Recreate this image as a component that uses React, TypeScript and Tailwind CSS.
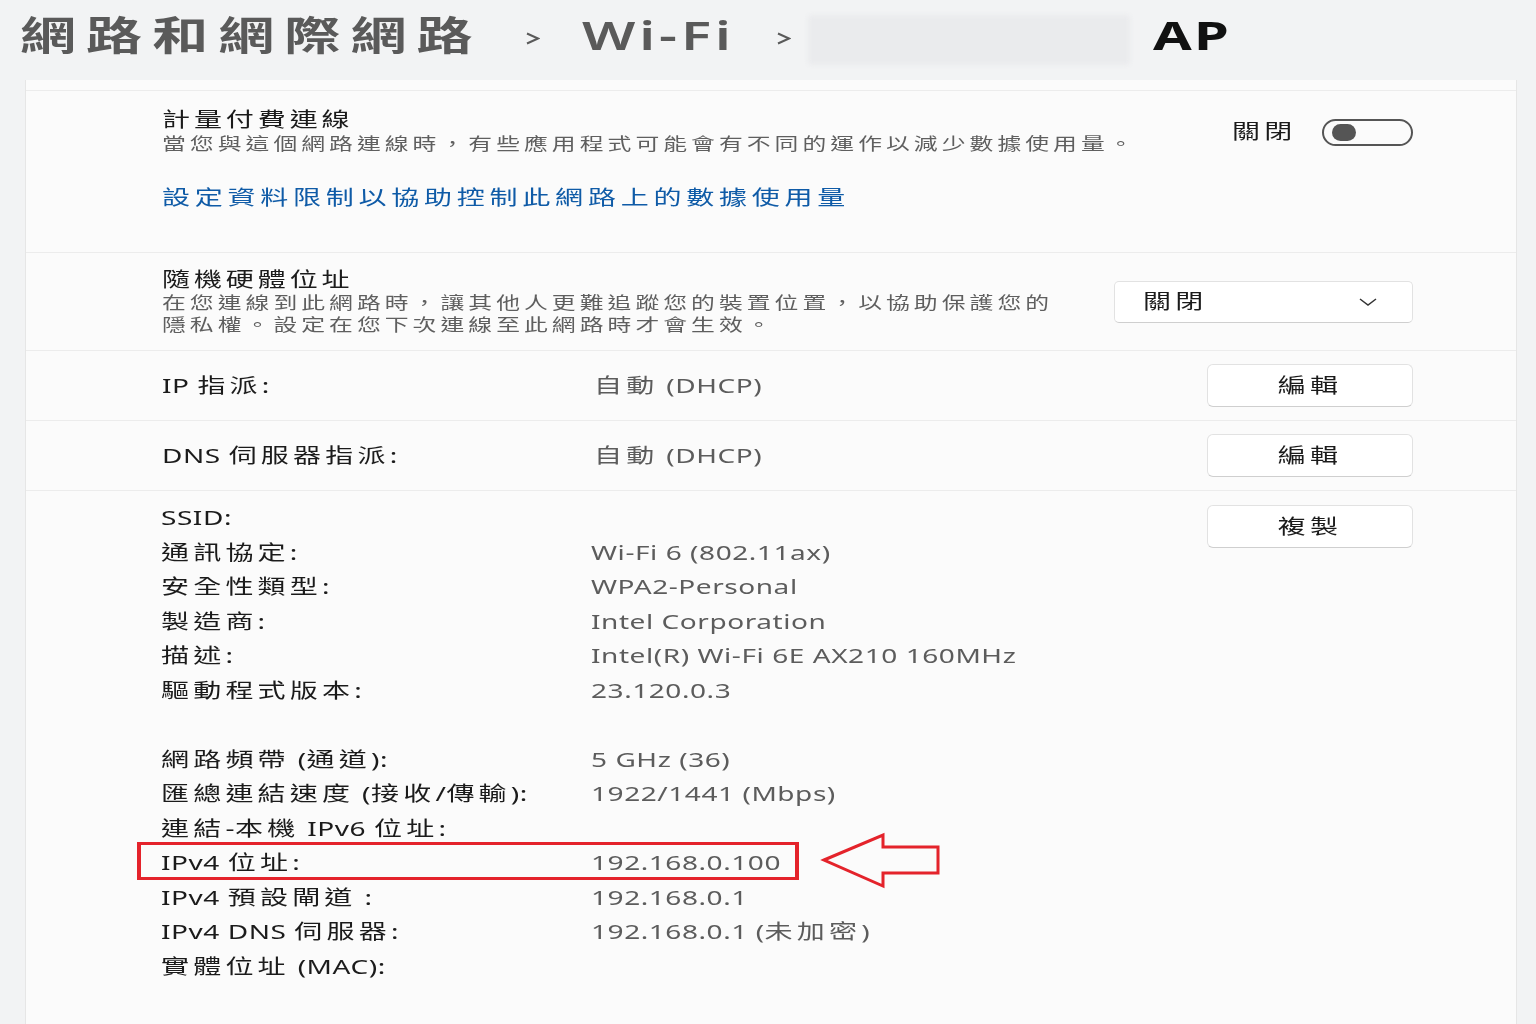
import React from "react";

const CJK = /([\u2E80-\u9FFF\uF900-\uFAFF\uFF00-\uFFEF\u3000-\u303F]+)/;

function T({
  text,
  c = "tracking-[0.15em]",
  l = "tracking-[0.02em]",
  center = false,
}: {
  text: string;
  c?: string;
  l?: string;
  center?: boolean;
}) {
  const parts = text.split(CJK);
  return (
    <span
      className={
        center
          ? "inline-block whitespace-nowrap origin-center scale-x-[1.4]"
          : "inline-block whitespace-nowrap origin-left scale-x-[1.4]"
      }
    >
      {parts.map((p, i) =>
        p ? (
          <span key={i} className={CJK.test(p) ? c : l}>
            {p}
          </span>
        ) : null
      )}
    </span>
  );
}

function Chevron() {
  return (
    <svg width="15" height="13" viewBox="0 0 15 13" className="shrink-0 mt-[22px]">
      <path d="M2 1.5 L13 6.5 L2 11.5" fill="none" stroke="#5a5a5a" strokeWidth="2" />
    </svg>
  );
}

function Btn({ label }: { label: string }) {
  return (
    <div className="w-[206px] h-[43px] shrink-0 rounded-[6px] bg-white border border-[#e2e2e2] border-b-[#cfcfcf] flex items-center justify-center text-[20px] text-[#1b1b1b]">
      <T text={label} center />
    </div>
  );
}

const props1: [string, string][] = [
  ["SSID:", ""],
  ["通訊協定:", "Wi-Fi 6 (802.11ax)"],
  ["安全性類型:", "WPA2-Personal"],
  ["製造商:", "Intel Corporation"],
  ["描述:", "Intel(R) Wi-Fi 6E AX210 160MHz"],
  ["驅動程式版本:", "23.120.0.3"],
];

const props2: [string, string][] = [
  ["網路頻帶 (通道):", "5 GHz (36)"],
  ["匯總連結速度 (接收/傳輸):", "1922/1441 (Mbps)"],
  ["連結-本機 IPv6 位址:", ""],
  ["IPv4 位址:", "192.168.0.100"],
  ["IPv4 預設閘道 :", "192.168.0.1"],
  ["IPv4 DNS 伺服器:", "192.168.0.1 (未加密)"],
  ["實體位址 (MAC):", ""],
];

function PropRow({ label, value, mark }: { label: string; value: string; mark?: boolean }) {
  return (
    <div className="relative flex h-[34.5px] items-center">
      <div className="w-[430px] shrink-0 text-[#1b1b1b]">
        <T text={label} />
      </div>
      <div className="text-[#5c5c5c]">{value ? <T text={value} /> : null}</div>
      {mark && (
        <>
          <div className="absolute left-[-24px] top-[-4px] w-[662px] h-[38px] border-y-[3px] border-x-[4px] border-[#e4232b]" />
          <svg width="122" height="58" viewBox="0 0 122 58" className="absolute left-[659px] top-[-14px]">
            <path
              d="M4 28 L63 3 L63 15 L118 15 L118 41 L63 41 L63 54 Z"
              fill="none"
              stroke="#e4232b"
              strokeWidth="3"
              strokeLinejoin="miter"
            />
          </svg>
        </>
      )}
    </div>
  );
}

export default function App() {
  return (
    <div className="w-[1536px] h-[1024px] overflow-hidden bg-[#f2f3f4] font-['Noto_Sans','Noto_Sans_CJK_TC',sans-serif]">
      {/* Header */}
      <div className="h-[80px] flex items-start pt-[10px] pl-[20px]">
        <div className="w-[505px] shrink-0 text-[40px] leading-[50px] font-semibold text-[#5a5a5a]">
          <T text="網路和網際網路" c="tracking-[0.18em]" />
        </div>
        <Chevron />
        <div className="ml-[42px] w-[194px] shrink-0 text-[40px] leading-[50px] font-semibold text-[#5a5a5a]">
          <T text="Wi-Fi" l="tracking-[0.07em]" />
        </div>
        <Chevron />
        <div className="ml-[17px] mt-[5px] w-[322px] h-[50px] shrink-0 rounded-[4px] bg-[#eaebed] blur-[2px]" />
        <div className="ml-[23px] text-[40px] leading-[50px] font-bold text-[#111111]">
          <T text="AP" l="tracking-[0.04em]" />
        </div>
      </div>

      {/* Card */}
      <div className="ml-[25px] mr-[19px] h-[944px] bg-[#fbfbfb] border-l border-r border-[#e6e6e6]">
        <div className="h-[11px] border-b border-[#ececec]" />

        {/* Metered */}
        <div className="pt-[17px] pb-[40px] pl-[136px] pr-[103px] border-b border-[#ececec]">
          <div className="flex items-center justify-between">
            <div>
              <div className="text-[20px] leading-[24px] text-[#1b1b1b]">
                <T text="計量付費連線" c="tracking-[0.14em]" />
              </div>
              <div className="text-[17px] leading-[24px] text-[#5f5f5f]">
                <T text="當您與這個網路連線時，有些應用程式可能會有不同的運作以減少數據使用量。" c="tracking-[0.17em]" />
              </div>
            </div>
            <div className="flex items-center">
              <div className="w-[90px] text-[20px] text-[#1b1b1b]">
                <T text="關閉" />
              </div>
              <div className="w-[91px] h-[27px] rounded-full border-2 border-[#555555] flex items-center pl-[8px]">
                <div className="w-[24px] h-[17px] rounded-full bg-[#555555]" />
              </div>
            </div>
          </div>
          <div className="mt-[28px] text-[20px] leading-[28px] text-[#0f5ba7]">
            <T text="設定資料限制以協助控制此網路上的數據使用量" c="tracking-[0.17em]" />
          </div>
        </div>

        {/* Random hardware address */}
        <div className="pt-[15px] pb-[14px] pl-[136px] pr-[103px] border-b border-[#ececec] flex items-center justify-between">
          <div>
            <div className="text-[20px] leading-[24px] text-[#1b1b1b]">
              <T text="隨機硬體位址" c="tracking-[0.14em]" />
            </div>
            <div className="text-[17px] leading-[22px] text-[#5f5f5f]">
              <div>
                <T text="在您連線到此網路時，讓其他人更難追蹤您的裝置位置，以協助保護您的" c="tracking-[0.17em]" />
              </div>
              <div>
                <T text="隱私權。設定在您下次連線至此網路時才會生效。" c="tracking-[0.17em]" />
              </div>
            </div>
          </div>
          <div className="w-[299px] h-[42px] rounded-[5px] bg-white border border-[#e2e2e2] border-b-[#cfcfcf] flex items-center justify-between pl-[28px] pr-[34px]">
            <div className="text-[20px] text-[#1b1b1b]">
              <T text="關閉" />
            </div>
            <svg width="20" height="10" viewBox="0 0 20 10">
              <path d="M2 2 L10 8 L18 2" fill="none" stroke="#333333" strokeWidth="1.5" />
            </svg>
          </div>
        </div>

        {/* IP assignment */}
        <div className="h-[70px] pl-[136px] pr-[103px] border-b border-[#ececec] flex items-center text-[20px]">
          <div className="w-[432px] shrink-0 text-[#1b1b1b]">
            <T text="IP 指派:" />
          </div>
          <div className="flex-1 text-[#5c5c5c]">
            <T text="自動 (DHCP)" />
          </div>
          <Btn label="編輯" />
        </div>

        {/* DNS assignment */}
        <div className="h-[70px] pl-[136px] pr-[103px] border-b border-[#ececec] flex items-center text-[20px]">
          <div className="w-[432px] shrink-0 text-[#1b1b1b]">
            <T text="DNS 伺服器指派:" />
          </div>
          <div className="flex-1 text-[#5c5c5c]">
            <T text="自動 (DHCP)" />
          </div>
          <Btn label="編輯" />
        </div>

        {/* Properties */}
        <div className="pt-[10px] pl-[135px] pr-[103px] flex items-start text-[20px]">
          <div className="flex-1">
            {props1.map(([l, v]) => (
              <PropRow key={l} label={l} value={v} />
            ))}
            <div className="h-[34.5px]" />
            {props2.map(([l, v]) => (
              <PropRow key={l} label={l} value={v} mark={l === "IPv4 位址:"} />
            ))}
          </div>
          <div className="mt-[4px]">
            <Btn label="複製" />
          </div>
        </div>
      </div>
    </div>
  );
}
